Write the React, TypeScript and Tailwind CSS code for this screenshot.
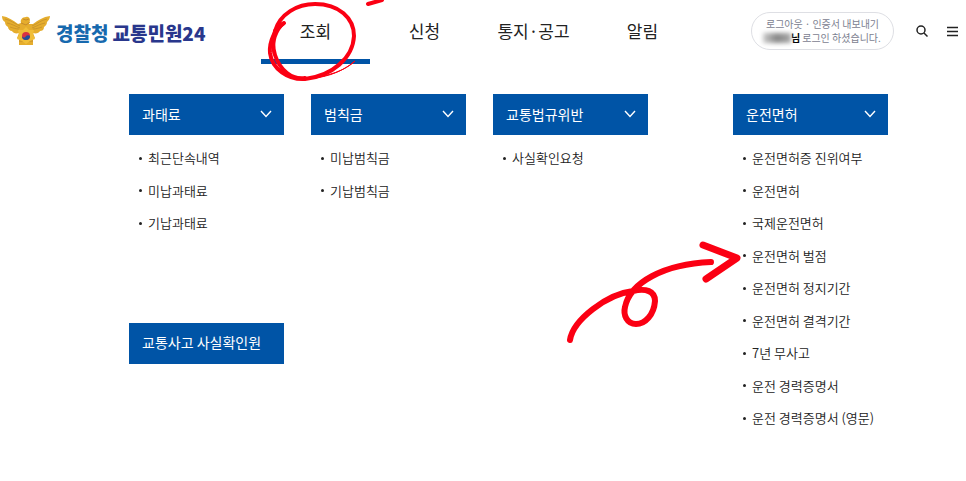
import React from "react";

type Menu = { title: string; items: string[] };

const nav = ["조회", "신청", "통지·공고", "알림"];

const menus: Menu[] = [
  { title: "과태료", items: ["최근단속내역", "미납과태료", "기납과태료"] },
  { title: "범칙금", items: ["미납범칙금", "기납범칙금"] },
  { title: "교통법규위반", items: ["사실확인요청"] },
];

const license: Menu = {
  title: "운전면허",
  items: [
    "운전면허증 진위여부",
    "운전면허",
    "국제운전면허",
    "운전면허 벌점",
    "운전면허 정지기간",
    "운전면허 결격기간",
    "7년 무사고",
    "운전 경력증명서",
    "운전 경력증명서 (영문)",
  ],
};

function Emblem() {
  return (
    <svg width="50" height="32" viewBox="0 0 50 32" aria-hidden="true">
      <path
        d="M1 1C7 2 12 5 17 9L20 8C19 5 21 2 25 2C27 1 29 3 29 5L28 9L32 9C37 5 42 2 49 1C49 4 47 6 46 7C46 10 44 11 43 12C43 15 41 16 39 16C38 18 35 19 32 18L34 23L32 24L32 30L18 30L18 24L16 23L18 18C15 19 12 18 11 16C9 16 7 14 7 12C5 11 4 9 4 7C2 6 1 4 1 1Z"
        fill="#e5ad2d"
      />
      <path
        d="M4 4C10 5 14 9 19 11M6 8C11 9 14 11 19 13M9 12C12 13 15 14 18 14M46 4C40 5 36 9 31 11M44 8C39 9 36 11 31 13M41 12C38 13 35 14 32 14"
        fill="none"
        stroke="#b9842a"
        strokeWidth="0.6"
      />
      <path d="M20 8L25 10L29 7M22 4L25 5L28 4M18 26L32 26" fill="none" stroke="#bd812a" strokeWidth="0.8" />
      <path d="M25 12L28 15L33 15L32 20L34 24L29 26L25 29L21 26L16 24L18 20L17 15L22 15Z" fill="#f0be38" />
      <circle cx="25" cy="21" r="4" fill="#d93443" />
      <path d="M21 21C22 23 24 23 25 21C26 20 28 20 29 21A4 4 0 0 1 21 21Z" fill="#20539b" />
    </svg>
  );
}

function MenuColumn({ title, items }: Menu) {
  return (
    <section className="w-[155px] shrink-0">
      <button
        type="button"
        className="flex h-[41px] w-full items-center justify-between bg-[#0054a6] pr-3 pb-0.5 pl-[13px] text-sm text-white"
      >
        <span>{title}</span>
        <svg width="12" height="8" viewBox="0 0 12 8" fill="none" stroke="currentColor" strokeWidth="1.4" aria-hidden="true">
          <path d="M1 1L6 6.5L11 1" />
        </svg>
      </button>
      <ul className="mt-[7px] pl-[10px] text-[13px] leading-[2.5] font-[350] text-[#222]">
        {items.map((item) => (
          <li key={item} className="flex items-center gap-[6px] whitespace-nowrap">
            <span className="size-[3px] rounded-full bg-[#222]" />
            <a href="#">{item}</a>
          </li>
        ))}
      </ul>
    </section>
  );
}

export default function App() {
  return (
    <div className="relative min-h-screen overflow-hidden bg-white font-['Noto_Sans_CJK_KR',sans-serif] text-[#222]">
      <header className="flex h-16 items-center">
        <a href="#" className="flex w-[261px] shrink-0 items-center gap-[5px] pb-0.5 pl-[1px] text-[19px] font-black whitespace-nowrap">
          <Emblem />
          <span className="flex gap-1 pt-1">
            <span className="text-[#1769ae]">경찰청</span>
            <span className="text-[#29378c]">교통민원24</span>
          </span>
        </a>
        <nav className="flex self-stretch">
          {nav.map((label, i) => (
            <a
              key={label}
              href="#"
              className={`flex w-[109px] items-center justify-center border-b-[5px] pt-0.5 text-[17px] whitespace-nowrap ${
                i === 0 ? "border-[#0054a6]" : "border-transparent"
              }`}
            >
              {label}
            </a>
          ))}
        </nav>
        <div className="ml-auto flex shrink-0 items-center pr-2 pb-0.5">
          <div className="flex h-[38px] w-[143px] flex-col justify-center rounded-full border border-[#dedfe4] text-[10px] leading-[14px] whitespace-nowrap text-[#7c8190]">
            <p className="flex justify-center gap-[2px]">
              <a href="#">로그아웃</a>
              <span>·</span>
              <a href="#">인증서 내보내기</a>
            </p>
            <p className="flex items-center pl-[11px]">
              <span className="h-[10px] w-7 bg-linear-to-r from-[#ccc] via-[#888] to-[#aaa] blur-[2px]" />
              <b className="mr-[2px] text-black">님</b>로그인 하셨습니다.
            </p>
          </div>
          <button type="button" aria-label="검색" className="ml-[22px]">
            <svg width="12" height="12" viewBox="0 0 12 12" fill="none" stroke="#222" strokeWidth="1.5">
              <circle cx="5" cy="5" r="4" />
              <path d="M8 8L11.5 11.5" />
            </svg>
          </button>
          <button type="button" aria-label="전체 메뉴" className="ml-[19px]">
            <svg width="11" height="11" viewBox="0 0 11 11" stroke="#222" strokeWidth="1.5">
              <path d="M0 1.5H11M0 5.5H11M0 9.5H11" />
            </svg>
          </button>
        </div>
      </header>

      <main className="flex gap-[85px] pt-[30px] pl-[129px]">
        <div className="flex flex-col gap-[83px]">
          <div className="flex gap-[27px]">
            {menus.map((menu) => (
              <MenuColumn key={menu.title} {...menu} />
            ))}
          </div>
          <a
            href="#"
            className="flex h-[41px] w-[155px] items-center bg-[#0054a6] pb-0.5 pl-[13px] text-sm whitespace-nowrap text-white"
          >
            교통사고 사실확인원
          </a>
        </div>
        <MenuColumn {...license} />
      </main>

      <svg
        className="pointer-events-none absolute top-0 left-0"
        width="966"
        height="481"
        viewBox="0 0 966 481"
        fill="none"
        stroke="#fb0013"
        strokeLinecap="round"
        strokeLinejoin="round"
        aria-hidden="true"
      >
        <path
          d="M275 31C280 14 297 4 315 4C339 4 354 18 354 36C353 58 332 76 305 79C288 80 272 69 270 53C269 41 275 29 284 23"
          strokeWidth="4"
        />
        <path d="M275 31C270 48 276 64 287 73C292 77 298 79 305 78" strokeWidth="4" />
        <path d="M284 23C276 30 272 42 274 53" strokeWidth="3" />
        <path d="M300 79C323 79 341 73 355 61C346 70 328 77 307 78Z" fill="#fb0013" strokeWidth="1" />
        <path d="M368 4L382 0" strokeWidth="4" />
        <path
          d="M570 340C573 320 607 294 633 291C646 288 655 291 655 301C654 315 645 324 636 324C627 324 623 315 625 307C630 283 663 264 711 262"
          strokeWidth="6"
        />
        <path d="M703 245L737 258L706 279" strokeWidth="7" />
      </svg>
    </div>
  );
}
